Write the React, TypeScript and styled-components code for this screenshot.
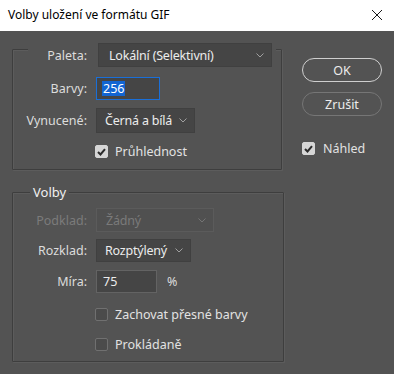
import React from "react";
import styled, { createGlobalStyle } from "styled-components";

const GlobalStyle = createGlobalStyle`
  html, body {
    margin: 0;
    padding: 0;
    background: #535353;
  }
  body {
    font-family: "Noto Sans", "Liberation Sans", sans-serif;
    font-size: 12px;
  }
`;

const Chevron = () => (
  <svg width="8" height="5" viewBox="0 0 8 5">
    <polyline points="0.5,0.5 4,4 7.5,0.5" fill="none" stroke="#a0a0a0" strokeWidth="1" />
  </svg>
);

const CheckMark = () => (
  <svg width="9" height="8" viewBox="0 0 9 8">
    <polyline points="1,4 3.5,6.5 8,1.2" fill="none" stroke="#2b2b2b" strokeWidth="2" />
  </svg>
);

const Dialog = () => (
  <Window>
    <TitleBar>
      <Title>Volby uložení ve formátu GIF</Title>
      <Close>
        <svg width="12" height="12" viewBox="0 0 12 12">
          <path d="M1 1 L11 11 M11 1 L1 11" stroke="#1a1a1a" strokeWidth="1" />
        </svg>
      </Close>
    </TitleBar>

    <Body>
      <LeftCol>
        {/* Paleta */}
        <Group $width={270} $pb={11}>
          <Header>
            <Label $width={59}>Paleta:</Label>
            <Select $width={174} $pl={10}>
              <span>Lokální (Selektivní)</span>
              <Chevron />
            </Select>
          </Header>
          <Row $mt={10}>
            <Label>Barvy:</Label>
            <Input $width={64} $focused>
              <Selected>256</Selected>
            </Input>
          </Row>
          <Row $mt={8}>
            <Label>Vynucené:</Label>
            <Select $width={99} $height={25} $pl={8}>
              <span>Černá a bílá</span>
              <Chevron />
            </Select>
          </Row>
          <CheckRow $mt={12}>
            <Box $checked>
              <CheckMark />
            </Box>
            <CheckText>Průhlednost</CheckText>
          </CheckRow>
        </Group>

        {/* Volby */}
        <Group $width={272} $mt={22} $pb={10}>
          <Legend>Volby</Legend>
          <Row $mt={8}>
            <Label $disabled>Podklad:</Label>
            <Select $width={118} $disabled>
              <span>Žádný</span>
              <Chevron />
            </Select>
          </Row>
          <Row $mt={7}>
            <Label>Rozklad:</Label>
            <Select $width={95} $height={23} $pl={8}>
              <span>Rozptýlený</span>
              <Chevron />
            </Select>
          </Row>
          <Row $mt={8}>
            <Label>Míra:</Label>
            <Input $width={61}>75</Input>
            <Unit>%</Unit>
          </Row>
          <CheckRow $mt={15}>
            <Box />
            <CheckText>Zachovat přesné barvy</CheckText>
          </CheckRow>
          <CheckRow $mt={17}>
            <Box />
            <CheckText>Prokládaně</CheckText>
          </CheckRow>
        </Group>
      </LeftCol>

      <RightCol>
        <Button $primary>OK</Button>
        <Button>Zrušit</Button>
        <PreviewRow>
          <Box $checked>
            <CheckMark />
          </Box>
          <CheckText>Náhled</CheckText>
        </PreviewRow>
      </RightCol>
    </Body>
  </Window>
);

export default function App() {
  return (
    <>
      <GlobalStyle />
      <Dialog />
    </>
  );
}

const Window = styled.div`
  width: 394px;
  height: 374px;
  background: #535353;
  overflow: hidden;
`;

const TitleBar = styled.div`
  height: 31px;
  background: #ffffff;
  display: flex;
  align-items: center;
  justify-content: space-between;
  padding: 0 11px 0 8px;
  box-sizing: border-box;
`;

const Title = styled.div`
  color: #000;
  font-size: 12px;
  margin-top: -2px;
`;

const Close = styled.div`
  display: flex;
  align-items: center;
  margin-top: -1px;
`;

const Body = styled.div`
  display: flex;
  gap: 18px;
  padding: 18px 0 0 12px;
`;

const LeftCol = styled.div`
  display: flex;
  flex-direction: column;
`;

const Group = styled.div<{ $width: number; $mt?: number; $pb: number }>`
  width: ${(p) => p.$width}px;
  margin-top: ${(p) => p.$mt ?? 0}px;
  padding-bottom: ${(p) => p.$pb}px;
  box-sizing: border-box;
  border: 1px solid #3e3e3e;
  box-shadow: inset 1px 1px 0 #5c5c5c, 1px 1px 0 #5c5c5c;
  border-radius: 1px;
  display: flex;
  flex-direction: column;
`;

const Row = styled.div<{ $mt: number }>`
  display: flex;
  align-items: center;
  gap: 9px;
  margin-top: ${(p) => p.$mt}px;
`;

const Header = styled.div`
  display: flex;
  align-items: center;
  gap: 11px;
  margin: -7px 0 0 15px;
  padding-right: 4px;
  width: fit-content;
  background: #535353;
`;

const Legend = styled.div`
  margin: -9px 0 0 17px;
  padding: 0 3px;
  width: fit-content;
  height: 16px;
  line-height: 16px;
  background: #535353;
  color: #f0f0f0;
  font-size: 13px;
`;

const Label = styled.div<{ $width?: number; $disabled?: boolean }>`
  width: ${(p) => p.$width ?? 74}px;
  text-align: right;
  color: ${(p) => (p.$disabled ? "#7b7b7b" : "#dcdcdc")};
  font-size: 12.5px;
  white-space: nowrap;
`;

const Select = styled.div<{ $width: number; $height?: number; $pl?: number; $disabled?: boolean }>`
  width: ${(p) => p.$width}px;
  height: ${(p) => p.$height ?? 24}px;
  box-sizing: border-box;
  display: flex;
  align-items: center;
  justify-content: space-between;
  padding: 0 7px 0 ${(p) => p.$pl ?? 9}px;
  background: ${(p) => (p.$disabled ? "#505050" : "#454545")};
  border: 1px solid ${(p) => (p.$disabled ? "#5b5b5b" : "#404040")};
  color: ${(p) => (p.$disabled ? "#7a7a7a" : "#ececec")};
  font-size: 12.5px;
  letter-spacing: -0.2px;
  white-space: nowrap;
  svg {
    opacity: ${(p) => (p.$disabled ? 0.45 : 1)};
    flex-shrink: 0;
  }
`;

const Input = styled.div<{ $width: number; $focused?: boolean }>`
  width: ${(p) => p.$width}px;
  height: 23px;
  box-sizing: border-box;
  display: flex;
  align-items: center;
  padding: 0 6px;
  background: #454545;
  border: ${(p) => (p.$focused ? "1.5px solid #1a6fd8" : "1px solid #636363")};
  color: #ececec;
  font-size: 12.5px;
`;

const Selected = styled.span`
  background: #1265d2;
  color: #ffffff;
  line-height: 15px;
  padding: 0 1px;
  margin-left: -1px;
`;

const Unit = styled.span`
  color: #dcdcdc;
  font-size: 12.5px;
  margin-left: 1px;
`;

const CheckRow = styled.div<{ $mt: number }>`
  display: flex;
  align-items: center;
  gap: 7px;
  height: 13px;
  margin-top: ${(p) => p.$mt}px;
  padding-left: 82px;
`;

const Box = styled.div<{ $checked?: boolean }>`
  width: 13px;
  height: 13px;
  box-sizing: border-box;
  border-radius: 2px;
  display: flex;
  align-items: center;
  justify-content: center;
  background: ${(p) => (p.$checked ? "#d6d6d6" : "#4b4b4b")};
  border: 1px solid ${(p) => (p.$checked ? "#d6d6d6" : "#707070")};
`;

const CheckText = styled.span`
  color: #e2e2e2;
  font-size: 12.5px;
  white-space: nowrap;
`;

const RightCol = styled.div`
  width: 80px;
  display: flex;
  flex-direction: column;
  padding-top: 9px;
  gap: 10px;
`;

const Button = styled.div<{ $primary?: boolean }>`
  height: 24px;
  box-sizing: border-box;
  border-radius: 12px;
  border: ${(p) => (p.$primary ? "1.5px solid #cfcfcf" : "1.5px solid #767676")};
  display: flex;
  align-items: center;
  justify-content: center;
  color: #ececec;
  font-size: 12.5px;
`;

const PreviewRow = styled.div`
  display: flex;
  align-items: center;
  gap: 8px;
  margin-top: 16px;
  height: 13px;
`;
